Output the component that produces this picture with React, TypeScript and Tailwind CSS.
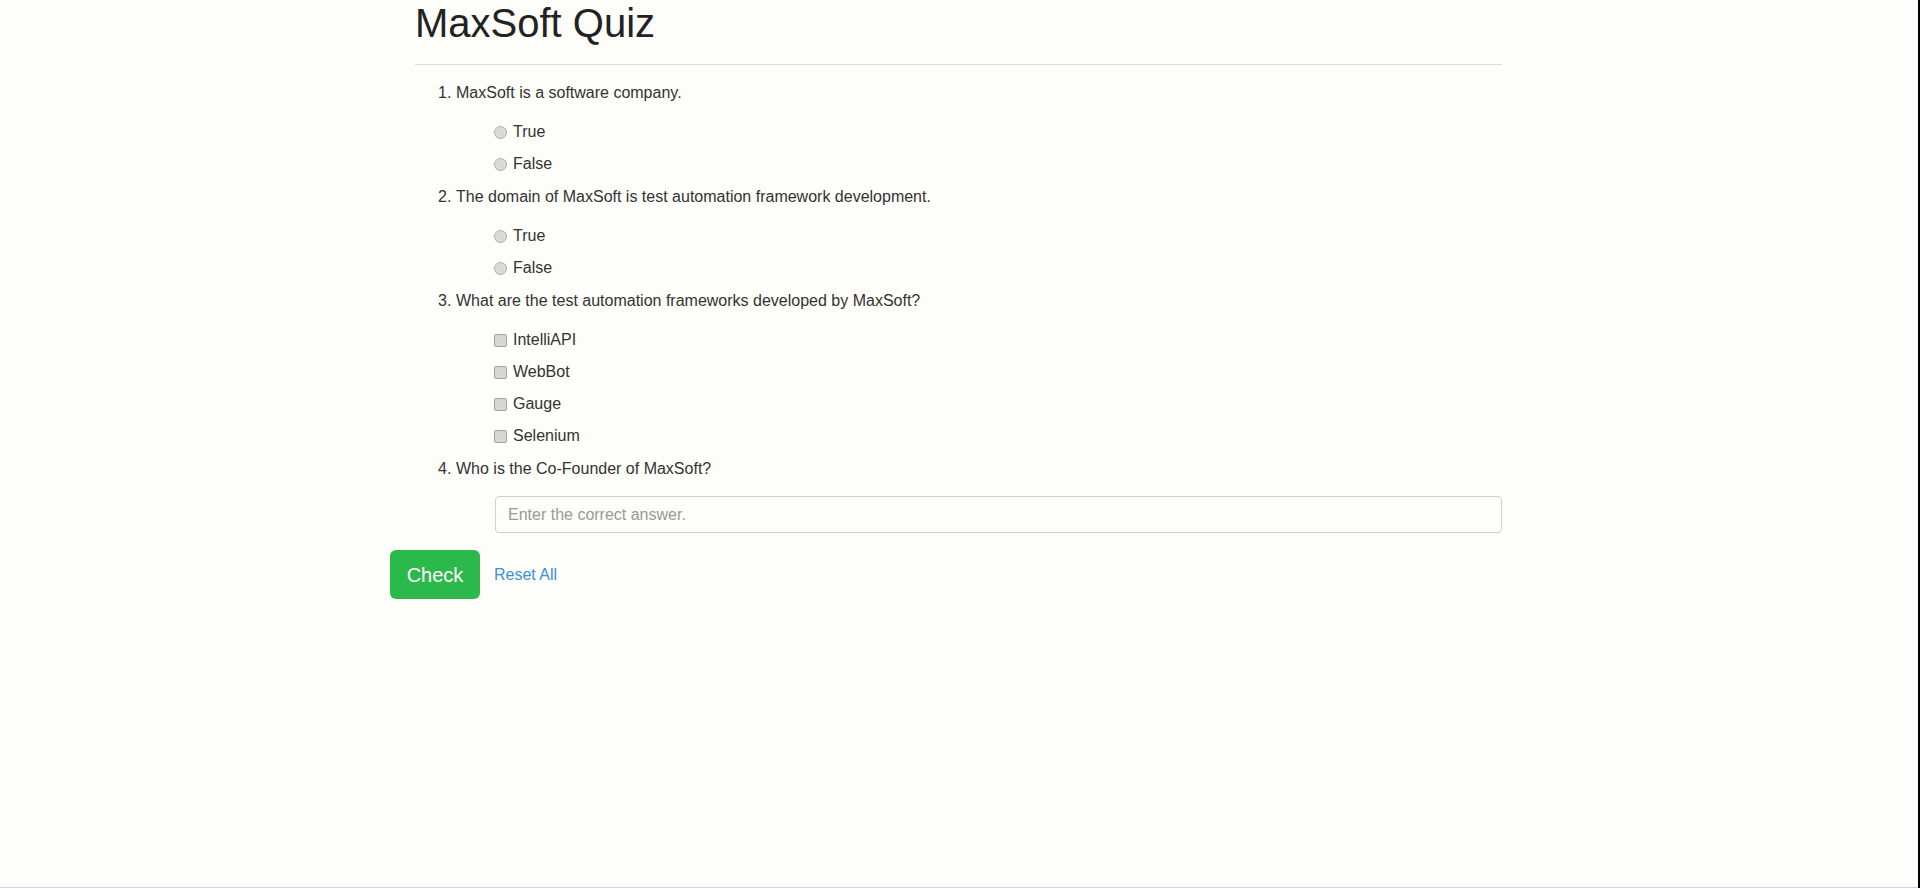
import React, { useState } from "react";

type Question = {
  id: number;
  text: string;
  kind: "radio" | "checkbox" | "text";
  options?: string[];
};

const questions: Question[] = [
  { id: 1, text: "MaxSoft is a software company.", kind: "radio", options: ["True", "False"] },
  {
    id: 2,
    text: "The domain of MaxSoft is test automation framework development.",
    kind: "radio",
    options: ["True", "False"],
  },
  {
    id: 3,
    text: "What are the test automation frameworks developed by MaxSoft?",
    kind: "checkbox",
    options: ["IntelliAPI", "WebBot", "Gauge", "Selenium"],
  },
  { id: 4, text: "Who is the Co-Founder of MaxSoft?", kind: "text" },
];

export default function App() {
  const [answer, setAnswer] = useState("");

  return (
    <div className="flex min-h-[888px] bg-[#fdfdfa] font-['Liberation_Sans',Arial,sans-serif] text-[#333333]">
      <div className="flex flex-1 flex-col">
        <div className="flex-1 pl-[390px]">
          {/* Header */}
          <div className="ml-[25px] w-[1087px] pt-[1px]">
            <h1 className="text-[40px] leading-[44px] font-normal text-[#222222]">MaxSoft Quiz</h1>
            <hr className="mt-[19px] border-0 border-t border-[#dcdcdc]" />
          </div>

          {/* Questions */}
          <div className="mt-[16px]">
            {questions.map((q) => (
              <div key={q.id} className="mb-[5px]">
                <div className="ml-[48px] flex text-[16px] leading-[24px]">
                  <span className="w-[18px]">{q.id}.</span>
                  <span>{q.text}</span>
                </div>

                {q.kind !== "text" && (
                  <div className="mt-[11px] ml-[104px]">
                    {q.options!.map((opt) => (
                      <label key={opt} className="flex h-[32px] items-center gap-[6px] text-[16px]">
                        {q.kind === "radio" ? (
                          <input
                            type="radio"
                            name={`q${q.id}`}
                            className="h-[13px] w-[13px] appearance-none rounded-full border border-[#adadad] bg-[#dadada]"
                          />
                        ) : (
                          <input
                            type="checkbox"
                            className="h-[13px] w-[13px] appearance-none rounded-[2px] border border-[#a4a4a4] bg-[#d6d6d6]"
                          />
                        )}
                        <span>{opt}</span>
                      </label>
                    ))}
                  </div>
                )}

                {q.kind === "text" && (
                  <input
                    type="text"
                    value={answer}
                    onChange={(e) => setAnswer(e.target.value)}
                    placeholder="Enter the correct answer."
                    className="mt-[15px] ml-[105px] block h-[37px] w-[1007px] rounded-[4px] border border-[#d0d0d0] bg-transparent px-[12px] text-[16px] outline-none placeholder:text-[#999999]"
                  />
                )}
              </div>
            ))}
          </div>

          {/* Actions */}
          <div className="mt-[17px] flex items-center gap-[14px]">
            <button className="h-[49px] w-[90px] rounded-[6px] bg-[#2cb94b] text-[20px] text-white">
              Check
            </button>
            <a href="#" className="text-[16px] text-[#3f8fdc]">
              Reset All
            </a>
          </div>
        </div>
        <div className="h-px bg-[#d3d6e2]" />
      </div>
      <div className="w-[2px] bg-black" />
    </div>
  );
}
